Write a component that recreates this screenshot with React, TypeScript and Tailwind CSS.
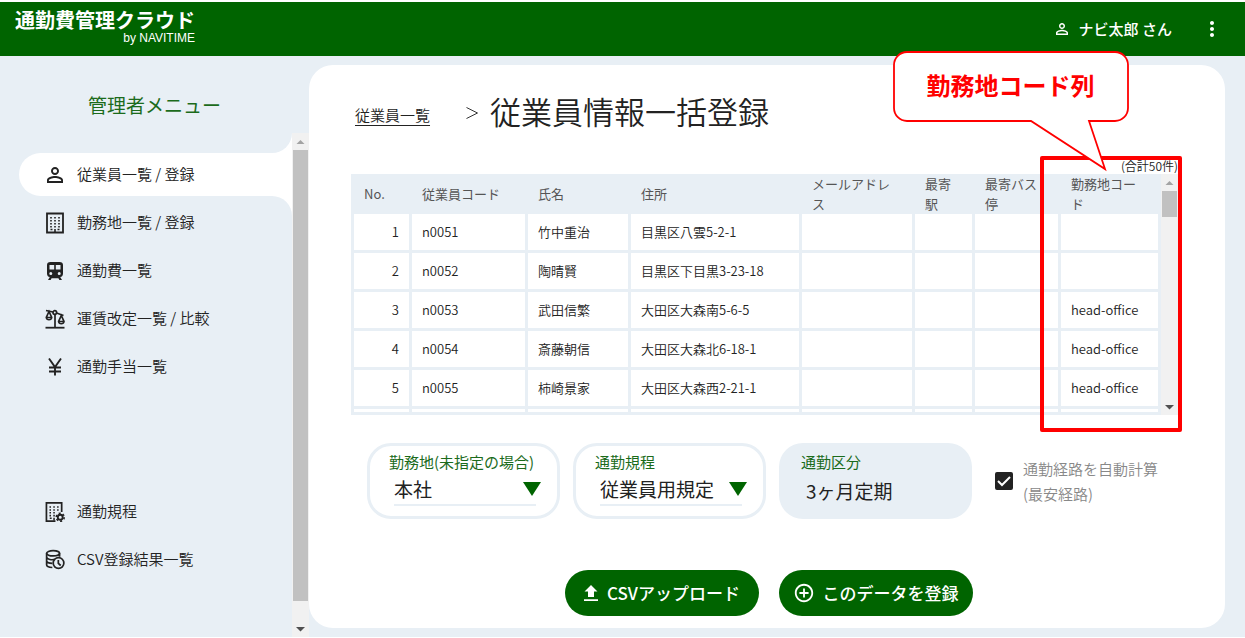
import type { ReactNode } from 'react'
import { MdAddCircleOutline, MdMoreVert, MdPersonOutline } from 'react-icons/md'

const TrainIcon = () => (
  <svg viewBox="0 0 20 20" className="h-5 w-5" fill="currentColor">
    <path
      fillRule="evenodd"
      d="M5.500 1h9c2.300 0 3.500 1 3.500 3v8.500c0 2-1 3.300-2.800 3.500l1.800 3h-2.600l-1-1.700H6.600L5.600 19H3l1.800-3C3 15.800 2 14.500 2 12.500V4c0-2 1.200-3 3.500-3zM4.500 4v4.500h4.700V4zM10.800 4v4.500h4.700V4zM5.800 11a1.500 1.500 0 100 3 1.500 1.500 0 000-3zM14.200 11a1.500 1.500 0 100 3 1.500 1.500 0 000-3z"
    />
  </svg>
)

const BuildingIcon = () => (
  <svg viewBox="0 0 20 22" className="h-[22px] w-5" fill="none" stroke="currentColor">
    <path d="M2 1.500h16v19H2z" strokeWidth="1.800" />
    <path d="M6 5v11M10 5v11M14 5v11" strokeWidth="1.600" strokeDasharray="1.600 1.400" />
    <path d="M10 17v4M5.500 17.500h2M12.500 17.500h2" strokeWidth="1.600" />
  </svg>
)

const BuildingGearIcon = () => (
  <svg viewBox="0 0 21 22" className="h-[22px] w-5 shrink-0" fill="none" stroke="currentColor">
    <path d="M11 20.500H1.500v-19h16V11" strokeWidth="1.800" />
    <path d="M5.500 5v11M9.500 5v11M13.500 5v6" strokeWidth="1.600" strokeDasharray="1.600 1.400" />
    <path d="M5 17.500h2M9.500 17v3" strokeWidth="1.600" />
    <circle cx="16" cy="16.500" r="2.600" strokeWidth="2" />
    <circle cx="16" cy="16.500" r="4.200" strokeWidth="1.600" strokeDasharray="2.200 2.198" />
  </svg>
)

const ScaleIcon = () => (
  <svg viewBox="0 0 20 20" className="h-5 w-5" fill="none" stroke="currentColor" strokeWidth="1.700">
    <path d="M.5 18.700h19" strokeWidth="1.800" />
    <path d="M1 1.500l7 1.500M11.500 4l7 2.500M10 5.500v13" />
    <circle cx="9.800" cy="3.500" r="1.800" />
    <path d="M4 2.500L1.300 8.500c.4 3 5 3 5.400 0L4 2.500zM1 8.500h6M16.300 6.500l-2.700 6c.4 3 5 3 5.400 0l-2.700-6zM13.300 12.500h6" />
  </svg>
)

const YenIcon = () => (
  <svg viewBox="0 0 20 20" className="h-5 w-5" fill="none" stroke="currentColor" strokeWidth="1.900">
    <path d="M4 1.500l6 8.500 6-8.500M10 10v8.500M4 10.500h12M4 14.500h12" />
  </svg>
)

const DatabaseClockIcon = () => (
  <svg viewBox="0 0 21 21" className="h-[21px] w-5 shrink-0" fill="none" stroke="currentColor" strokeWidth="1.800">
    <ellipse cx="8.500" cy="4" rx="6.800" ry="2.800" />
    <path d="M1.700 4v12c0 1.500 2.500 2.800 6 2.900M15.300 4v3.500M1.700 8c.6 2.600 5.500 3.300 8.800 2.300M1.700 12c.4 1.600 3 2.500 6 2.500" />
    <circle cx="14.200" cy="14.200" r="5.600" />
    <path d="M14 11v3.500l2.500 2.300" />
  </svg>
)

const UploadIcon = () => (
  <svg viewBox="0 0 16 18" className="h-[18px] w-4 shrink-0" fill="currentColor">
    <path d="M8 1l6.500 6.500H11V13H5V7.500H1.500zM1 15.200h14V17H1z" />
  </svg>
)

const mainMenu = [
  { label: '従業員一覧 / 登録', icon: <MdPersonOutline className="-mx-0.5 h-6 w-6 shrink-0" />, active: true },
  { label: '勤務地一覧 / 登録', icon: <BuildingIcon /> },
  { label: '通勤費一覧', icon: <TrainIcon /> },
  { label: '運賃改定一覧 / 比較', icon: <ScaleIcon /> },
  { label: '通勤手当一覧', icon: <YenIcon /> }
]

const subMenu = [
  { label: '通勤規程', icon: <BuildingGearIcon /> },
  { label: 'CSV登録結果一覧', icon: <DatabaseClockIcon /> }
]

const columns = [
  { label: 'No.', width: 'w-[58px]' },
  { label: '従業員コード', width: 'w-[116px]' },
  { label: '氏名', width: 'w-[103px]' },
  { label: '住所', width: 'w-[171px]' },
  { label: 'メールアドレス', width: 'w-[113px]' },
  { label: '最寄駅', width: 'w-[60px]' },
  { label: '最寄バス停', width: 'w-[86px]' },
  { label: '勤務地コード', width: '' }
]

const rows = [
  ['1', 'n0051', '竹中重治', '目黒区八雲5-2-1', '', '', '', ''],
  ['2', 'n0052', '陶晴賢', '目黒区下目黒3-23-18', '', '', '', ''],
  ['3', 'n0053', '武田信繁', '大田区大森南5-6-5', '', '', '', 'head-office'],
  ['4', 'n0054', '斎藤朝信', '大田区大森北6-18-1', '', '', '', 'head-office'],
  ['5', 'n0055', '柿崎景家', '大田区大森西2-21-1', '', '', '', 'head-office'],
  ['', '', '', '', '', '', '', '']
]

function Scrollbar({ thumb }: { thumb: string }) {
  return (
    <div className="flex w-[17px] shrink-0 flex-col items-center bg-[#f1f1f1]" aria-hidden="true">
      <svg viewBox="0 0 17 17" className="h-[17px] w-[17px] shrink-0">
        <path d="M4.500 11l4-4 4 4z" fill="#a3a3a3" />
      </svg>
      <div className={`w-[15px] bg-[#c1c1c1] ${thumb}`} />
      <svg viewBox="0 0 17 17" className="mt-auto h-[17px] w-[17px] shrink-0">
        <path d="M4 7l4.500 4.500L13 7z" fill="#505050" />
      </svg>
    </div>
  )
}

function MenuItem({ label, icon, active }: { label: string; icon: ReactNode; active?: boolean }) {
  return (
    <li className="relative">
      {active && (
        <>
          <span className="absolute right-0 bottom-full h-5 w-5 bg-white">
            <span className="block h-full w-full rounded-br-[20px] bg-[#e8eff5]" />
          </span>
          <span className="absolute top-full right-0 h-5 w-5 bg-white">
            <span className="block h-full w-full rounded-tr-[20px] bg-[#e8eff5]" />
          </span>
        </>
      )}
      <a
        href="#"
        className={`relative flex h-[43px] items-center gap-3 rounded-l-full pl-[26px] text-[15px] font-[350] text-[#222] ${active ? 'bg-white' : ''}`}
      >
        {icon}
        {label}
      </a>
    </li>
  )
}

function SelectBox({ id, label, value }: { id: string; label: string; value: string }) {
  return (
    <div className="w-[193px] rounded-[24px] border-[3px] border-[#e8eff5] pt-1 pl-[19px]">
      <label htmlFor={id} className="block text-[15px] leading-6 text-[#1b6b1b]">
        {label}
      </label>
      <div className="relative ml-[5px] w-[147px]">
        <select
          id={id}
          defaultValue={value}
          className="block h-8 w-[142px] appearance-none border-b-2 border-[#e8eff5] bg-transparent text-[19px] text-[#222]"
        >
          <option>{value}</option>
        </select>
        <svg viewBox="0 0 18 14" className="pointer-events-none absolute top-2 right-0 h-3.5 w-[18px]" fill="#006400">
          <path d="M0 0h18L9 14z" />
        </svg>
      </div>
    </div>
  )
}

export default function App() {
  return (
    <div className="flex min-h-screen flex-col border-t-2 border-b border-white bg-[#e8eff5] font-['Noto_Sans_CJK_JP',sans-serif] text-[#222]">
      <header className="flex h-[54px] shrink-0 items-start justify-between bg-[#006400] text-white">
        <div className="pt-1.5 pl-[15px] text-right">
          <p className="text-[20px] leading-6 font-bold">通勤費管理クラウド</p>
          <p className="font-['Liberation_Sans',sans-serif] text-[12px] leading-3">by NAVITIME</p>
        </div>
        <div className="flex h-full items-center pr-[21px]">
          <button type="button" className="flex items-center gap-2 text-[15px] font-medium">
            <MdPersonOutline className="h-[18px] w-[18px]" />
            ナビ太郎 さん
          </button>
          <button type="button" aria-label="メニュー" className="ml-7">
            <MdMoreVert className="h-6 w-6" />
          </button>
        </div>
      </header>

      <div className="flex flex-1">
        <aside className="flex w-[309px] shrink-0 flex-col">
          <h2 className="pt-[33px] text-center text-[19px] leading-8 text-[#1b6b1b]">管理者メニュー</h2>
          <div className="mt-3 flex flex-1">
            <nav className="flex-1 pt-5 pl-[19px]">
              <ul className="flex flex-col gap-[5px]">
                {mainMenu.map((item) => (
                  <MenuItem key={item.label} {...item} />
                ))}
              </ul>
              <ul className="mt-[102px] flex flex-col gap-[5px]">
                {subMenu.map((item) => (
                  <MenuItem key={item.label} {...item} />
                ))}
              </ul>
            </nav>
            <Scrollbar thumb="h-[451px]" />
          </div>
        </aside>

        <main className="relative mt-[9px] mr-5 mb-[9px] min-w-0 flex-1 rounded-[24px] bg-white pr-[47px] pb-3 pl-[42px]">
          <div className="flex h-[92px] items-center pl-1">
            <a href="#" className="mt-2 text-[15px] font-[350] underline underline-offset-4">
              従業員一覧
            </a>
            <svg viewBox="0 0 12 14" className="mt-1 mr-3 ml-9 h-3.5 w-3" fill="none" stroke="#333">
              <path d="M.5 1.500l11 5.500-11 5.500" />
            </svg>
            <h1 className="text-[31px] font-[350] whitespace-nowrap">従業員情報一括登録</h1>
          </div>

          <div className="relative mt-px">
            <p className="text-right text-[12px] leading-4 font-[350]">(合計50件)</p>
            <div className="flex h-[241px] overflow-hidden">
              <div className="min-w-0 flex-1 overflow-hidden border-b-[3px] border-[#e8eff5] bg-[#e8eff5]">
                <table className="w-full table-fixed border-separate border-spacing-0 text-left text-[13px] font-[350]">
                  <thead>
                    <tr className="h-10">
                      {columns.map((column) => (
                        <th
                          key={column.label}
                          className={`pr-5 pl-[13px] leading-5 font-normal text-[#555] ${column.width}`}
                        >
                          {column.label}
                        </th>
                      ))}
                    </tr>
                  </thead>
                  <tbody>
                    {rows.map((row, i) => (
                      <tr key={i} className="h-[39px]">
                        {row.map((cell, j) => (
                          <td
                            key={j}
                            className={`border-b-[3px] border-l-[3px] border-[#e8eff5] bg-white px-2.5 last:border-r-[3px] ${j === 0 ? 'text-right' : ''}`}
                          >
                            {cell}
                          </td>
                        ))}
                      </tr>
                    ))}
                  </tbody>
                </table>
              </div>
              <Scrollbar thumb="h-[26px]" />
            </div>
            <div className="pointer-events-none absolute -top-0.5 -right-1 -bottom-[17px] w-[142px] rounded-xs border-4 border-[#f00]" />
          </div>

          <form className="mt-7">
            <div className="flex h-[76px] gap-[13px] pl-4">
              <SelectBox id="office" label="勤務地(未指定の場合)" value="本社" />
              <SelectBox id="rule" label="通勤規程" value="従業員用規定" />
              <div className="w-[193px] rounded-[24px] bg-[#e8eff5] pt-[7px] pl-[22px]">
                <p className="text-[15px] leading-6 text-[#1b6b1b]">通勤区分</p>
                <p className="pl-[5px] text-[19px] leading-[34px]">3ヶ月定期</p>
              </div>
              <label className="ml-2.5 flex items-center gap-2.5 text-[15px] leading-[25px] font-[350] text-[#888]">
                <span className="relative flex">
                  <input
                    type="checkbox"
                    defaultChecked
                    className="peer h-[18px] w-[18px] appearance-none rounded-xs border-2 border-[#222] checked:bg-[#222]"
                  />
                  <svg
                    viewBox="0 0 18 18"
                    className="pointer-events-none absolute inset-0 hidden peer-checked:block"
                    fill="none"
                    stroke="#fff"
                    strokeWidth="2"
                  >
                    <path d="M3 9l4 4 8-8" />
                  </svg>
                </span>
                <span>
                  通勤経路を自動計算
                  <br />
                  (最安経路)
                </span>
              </label>
            </div>

            <div className="mt-[51px] flex justify-center gap-5 pl-2">
              <button
                type="button"
                className="flex h-[46px] w-[194px] items-center justify-center gap-2 rounded-full bg-[#006400] text-[17px] font-medium text-white"
              >
                <UploadIcon />
                CSVアップロード
              </button>
              <button
                type="submit"
                className="flex h-[46px] w-[194px] items-center justify-center gap-2 rounded-full bg-[#006400] text-[17px] font-medium text-white"
              >
                <MdAddCircleOutline className="h-[22px] w-[22px] shrink-0" />
                このデータを登録
              </button>
            </div>
          </form>

          {/* callout */}
          <div className="absolute -top-[15px] right-24 h-[124px] w-[237px]">
            <svg viewBox="0 0 237 124" className="absolute inset-0" fill="#fff" stroke="#f00" strokeWidth="1.800">
              <path d="M15 2h208a13 13 0 0113 13v43a13 13 0 01-13 13h-26l16 48-74-48H15A13 13 0 012 58V15A13 13 0 0115 2z" />
            </svg>
            <p className="relative text-center text-[24px] leading-[70px] font-bold text-[#f00]">勤務地コード列</p>
          </div>
        </main>
      </div>
    </div>
  )
}
